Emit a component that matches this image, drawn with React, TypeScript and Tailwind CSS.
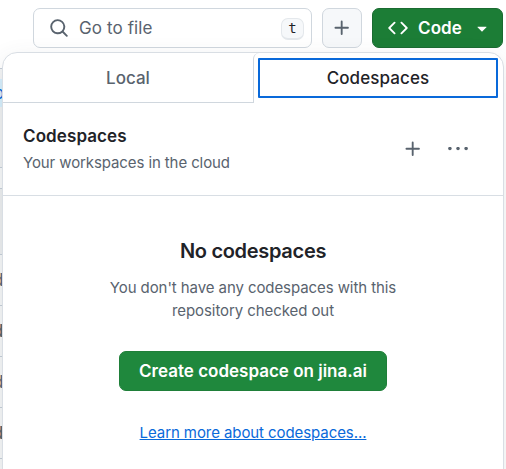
import React from "react";

const font = "font-['Inter','Liberation_Sans',sans-serif]";

function Plus({ className }: { className: string }) {
  return (
    <svg viewBox="0 0 16 16" className={className} fill="currentColor">
      <path d="M7.75 2a.75.75 0 0 1 .75.75V7h4.25a.75.75 0 0 1 0 1.5H8.5v4.25a.75.75 0 0 1-1.5 0V8.5H2.75a.75.75 0 0 1 0-1.5H7V2.75A.75.75 0 0 1 7.75 2Z" />
    </svg>
  );
}

function Toolbar() {
  return (
    <div className="flex gap-[10px] pl-[33px] pt-2">
      <div className="flex h-10 w-[279px] items-center rounded-[7px] border border-[#d0d7de] bg-white pl-[15px] pr-[7px] text-[#59636e]">
        <svg viewBox="0 0 16 16" className="size-5 shrink-0" fill="currentColor">
          <path d="M10.68 11.74a6 6 0 0 1-7.922-8.982 6 6 0 0 1 8.982 7.922l3.04 3.04a.749.749 0 0 1-.326 1.275.749.749 0 0 1-.734-.215ZM11.5 7a4.499 4.499 0 1 0-8.997 0A4.499 4.499 0 0 0 11.5 7Z" />
        </svg>
        <span className="ml-[10px] whitespace-nowrap text-[17px] leading-6 tracking-[0.1px]">Go to file</span>
        <kbd className="ml-auto mt-px flex h-[22px] w-[23px] items-center justify-center rounded-[7px] border border-b-2 border-[#e4e8ec] bg-[#f6f8fa] font-['DejaVu_Sans_Mono',monospace] text-[14px] text-[#1f2328]">t</kbd>
      </div>
      <button className="flex size-10 items-center justify-center rounded-[7px] border border-[#d0d7de] bg-[#f6f8fa] text-[#59636e]">
        <Plus className="size-5" />
      </button>
      <button className="flex h-10 w-[131px] items-center rounded-[7px] border border-[#1a6b31] bg-[#1c7d36] pl-[15px] text-white">
        <svg viewBox="0 0 16 16" className="size-5" fill="currentColor">
          <path d="m11.28 3.22 4.25 4.25a.75.75 0 0 1 0 1.06l-4.25 4.25a.749.749 0 0 1-1.275-.326.749.749 0 0 1 .215-.734L13.94 8l-3.72-3.72a.749.749 0 0 1 .326-1.275.749.749 0 0 1 .734.215Zm-6.56 0a.751.751 0 0 1 1.042.018.751.751 0 0 1 .018 1.042L2.06 8l3.72 3.72a.749.749 0 0 1-.326 1.275.749.749 0 0 1-.734-.215L.47 8.53a.75.75 0 0 1 0-1.06Z" />
        </svg>
        <span className="ml-[10px] text-[17px] font-semibold leading-6 tracking-[0.1px]">Code</span>
        <svg viewBox="0 0 16 16" className="ml-[10px] size-5" fill="currentColor">
          <path d="m4.427 7.427 3.396 3.396a.25.25 0 0 0 .354 0l3.396-3.396A.25.25 0 0 0 11.396 7H4.604a.25.25 0 0 0-.177.427Z" />
        </svg>
      </button>
    </div>
  );
}

function Background() {
  return (
    <div className="mt-5 w-[20px] text-[17px] leading-[18px] text-[#59636e]">
      <div className="h-[11px] border-t border-[#c6cfd8] bg-[#f3f4f5]" />
      <div className="h-[28px] bg-[#d6effc] pt-[5px]">
        <span className="-ml-[6px] text-[#0969da]">o</span>
      </div>
      <div className="h-[60px] bg-[#f0f1f2]" />
      <div className="h-[21px] border-t border-[#c6cfd8] bg-[#f7f8f9]" />
      <div className="h-[66px] border-t border-[#c6cfd8] bg-[#eceef0]" />
      {["d", "d", "d", "d", ""].map((letter, i) => (
        <div key={i} className="h-[51px] border-t border-[#c6cfd8] bg-[#f6f7f8] pt-4">
          <span className={i % 2 ? "-ml-[7px] font-semibold" : "-ml-[7px]"}>{letter}</span>
        </div>
      ))}
    </div>
  );
}

function Tabs() {
  return (
    <div className="flex h-[50px]">
      <button className="flex w-[250px] items-center justify-center border-b border-[#d0d7de] pt-[2px] text-[17px] font-medium text-[#59636e]">
        Local
      </button>
      <div className="flex flex-1 rounded-tl-[6px] border-l border-[#d0d7de] pl-1 pt-[5px]">
        <button className="flex h-10 w-[240px] items-center justify-center rounded-[1px] border-2 border-[#0969da] pt-px text-[17px] font-medium tracking-[0.1px] text-[#1f2328]">
          Codespaces
        </button>
      </div>
    </div>
  );
}

export default function App() {
  return (
    <div className={`relative h-[469px] w-[506px] overflow-hidden bg-white ${font}`}>
      <Toolbar />
      <Background />
      <div className="absolute left-[2px] top-[52px] h-[440px] w-[502px] rounded-[15px] border border-[#d9dee4] bg-white shadow-[0_8px_24px_rgba(66,74,83,0.12)]">
        <Tabs />
        <div className="flex h-[93px] items-center border-b border-[#d8dee4] pl-5 pr-[34px]">
          <div>
            <h2 className="text-[17px] font-semibold leading-6 tracking-[0.1px] text-[#1f2328]">Codespaces</h2>
            <p className="mt-1 text-[15px] leading-[22px] tracking-[-0.1px] text-[#59636e]">Your workspaces in the cloud</p>
          </div>
          <Plus className="ml-auto size-5 text-[#59636e]" />
          <svg viewBox="0 0 22 4" className="ml-[24px] h-1 w-[22px]" fill="#59636e">
            <circle cx="2.9" cy="1.6" r="1.75" />
            <circle cx="11" cy="1.6" r="1.75" />
            <circle cx="19.1" cy="1.6" r="1.75" />
          </svg>
        </div>
        <div className="flex flex-col items-center pt-10 text-center">
          <h3 className="text-[20px] font-semibold leading-[30px] tracking-[-0.3px] text-[#1f2328]">No codespaces</h3>
          <p className="mt-[10px] text-[15px] leading-[23px] tracking-[-0.08px] text-[#59636e]">
            You don't have any codespaces with this
            <br />
            repository checked out
          </p>
          <button className="mt-[29px] h-10 w-[268px] rounded-[7px] border border-[#1f7f39] bg-[#1f883d] pt-[2px] text-[17px] font-semibold text-white">
            Create codespace on jina.ai
          </button>
          <a className="mt-[31px] text-[15px] leading-[22px] tracking-[-0.08px] text-[#0969da] underline">Learn more about codespaces...</a>
        </div>
      </div>
    </div>
  );
}
